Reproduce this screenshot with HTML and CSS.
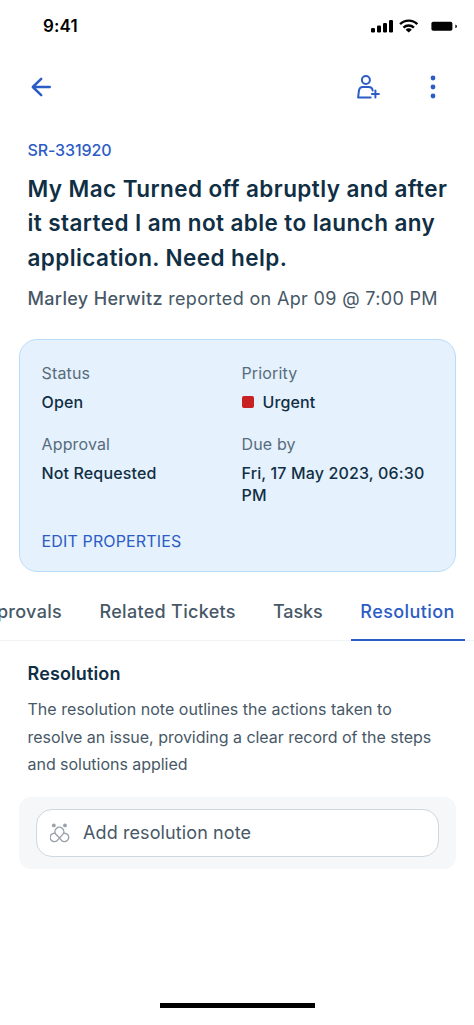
FILE: index.html
```html
<!DOCTYPE html>
<html lang="en">
<head>
<meta charset="utf-8">
<title>SR-331920</title>
<link rel="stylesheet" href="styles.css">
</head>
<body>
<div class="screen">
  <div class="status-bar">
    <span class="clock">9:41</span>
    <svg class="status-icons" width="88" height="16" viewBox="370 18 88 16">
      <rect x="371" y="28" width="4" height="4.5" rx="1.2"/>
      <rect x="377" y="25.6" width="4" height="6.9" rx="1.2"/>
      <rect x="383" y="23" width="4" height="9.5" rx="1.2"/>
      <rect x="389" y="20" width="4" height="12.5" rx="1.2"/>
      <g class="wifi">
        <path d="M400.1 24.2a12.200 12.200 0 0 1 17.200 0"/>
        <path d="M403.500 27.600a7.400 7.400 0 0 1 10.400 0"/>
      </g>
      <path d="M405.600 29.700a4.500 4.500 0 0 1 6.200 0l-3.100 2.900Z"/>
      <rect x="431.400" y="21.800" width="21" height="9" rx="1.800"/>
      <path d="M455.400 24.400v3.800q1.500-.5 1.500-1.900t-1.500-1.900Z"/>
    </svg>
  </div>
  <header class="nav">
    <svg class="icon back" width="20" height="20" viewBox="31 77 20 20">
      <path d="M49.700 87H33M41.200 78.800L32.800 87l8.400 8.200"/>
    </svg>
    <svg class="icon assign" width="26" height="26" viewBox="356 74 26 26">
      <circle cx="365.900" cy="80" r="4"/>
      <path d="M372.700 90.500c-.3-2.400-1.700-3.600-4.100-3.600h-5.800c-2.600 0-3.600 1.500-3.900 4l-.8 6.700h12.600M375.400 90.500v7M371.900 94h7"/>
    </svg>
    <svg class="dots" width="6" height="26" viewBox="0 0 6 26">
      <circle cx="3" cy="4" r="2.400"/><circle cx="3" cy="13" r="2.400"/><circle cx="3" cy="22" r="2.400"/>
    </svg>
  </header>
  <section class="summary">
    <div class="ticket-id">SR-331920</div>
    <h1 class="title">My Mac Turned off abruptly and after<br>it started I am not able to launch any<br>application. Need help.</h1>
    <p class="reporter"><span class="name">Marley Herwitz</span> <span class="when">reported on Apr 09 @ 7:00 PM</span></p>
  </section>
  <section class="properties">
    <dl class="grid">
      <div><dt>Status</dt><dd>Open</dd></div>
      <div><dt>Priority</dt><dd class="priority"><i class="swatch"></i>Urgent</dd></div>
      <div><dt>Approval</dt><dd>Not Requested</dd></div>
      <div><dt>Due by</dt><dd class="due">Fri, 17 May 2023, 06:30<br>PM</dd></div>
    </dl>
    <a class="edit">EDIT PROPERTIES</a>
  </section>
  <nav class="tabs">
    <a class="tab approvals">Approvals</a>
    <a class="tab related">Related Tickets</a>
    <a class="tab tasks">Tasks</a>
    <a class="tab active">Resolution</a>
  </nav>
  <section class="resolution">
    <h2>Resolution</h2>
    <p><span class="lead">The resolution note outlines the actions taken to</span><br>resolve an issue, providing a clear record of the steps<br>and solutions applied</p>
  </section>
  <div class="note-panel">
    <div class="note-input">
      <svg class="freddy" width="20" height="20" viewBox="50 823 20 20">
        <circle class="eye" cx="53.800" cy="825.400" r="1.900"/>
        <circle class="eye" cx="65" cy="825.400" r="1.900"/>
        <path d="M59.400 837.800L56 834.400A4.400 4.400 0 1 1 62.800 834.400L57.300 840.400A4.200 4.200 0 1 1 55.200 833.300M59.400 837.800L61.500 840.400A4.200 4.200 0 1 0 63.600 833.300"/>
      </svg>
      <span class="placeholder">Add resolution note</span>
    </div>
  </div>
  <div class="home-indicator"></div>
</div>
</body>
</html>
```
FILE: styles.css
```css
* { box-sizing: border-box; }
body { margin: 0; background: #fff; font-family: Inter, "Liberation Sans", sans-serif; color: #102f45; }
h1, h2, p, dl, dd { margin: 0; }
.screen { width: 474px; height: 1025px; display: flex; flex-direction: column; overflow: hidden; background: #fff; white-space: nowrap; }
.status-bar { height: 52px; flex: none; padding: 0 16px 0 43px; display: flex; align-items: center; justify-content: space-between; }
.clock { font-size: 17px; font-weight: 600; color: #000; letter-spacing: .1px; }
.status-icons { display: block; fill: #000; }
.wifi { fill: none; stroke: #000; stroke-width: 2.4; }
.nav { height: 70px; flex: none; padding: 0 38px 0 31px; display: flex; align-items: center; }
.icon { fill: none; stroke: #2c5cc5; stroke-linecap: round; stroke-linejoin: round; }
.back { stroke-width: 2.5; }
.assign { stroke-width: 2; margin-left: auto; margin-right: 48px; }
.dots { fill: #2c5cc5; }
.summary { padding: 16px 0 0 27.5px; flex: none; }
.ticket-id { font-size: 16px; line-height: 24px; font-weight: 500; color: #2c5cc5; letter-spacing: -.12px; }
.title { margin-top: 10px; font-size: 22.5px; line-height: 34.3px; font-weight: 600; letter-spacing: .41px; }
.reporter { margin-top: 12px; font-size: 18px; line-height: 24px; color: #475867; letter-spacing: .34px; }
.name { font-weight: 500; }
.properties { margin: 28px 18.5px 0; height: 233px; flex: none; padding: 22px 22px 0; background: #e5f1fc; border: 1.5px solid #bbdcf8; border-radius: 18px; }
.grid { display: grid; grid-template-columns: 200px 1fr; row-gap: 19px; height: 167px; align-content: start; }
dt { font-size: 16px; line-height: 23px; color: #576c7d; letter-spacing: .15px; }
dd { margin-top: 6px; font-size: 16px; line-height: 22.7px; font-weight: 500; letter-spacing: .14px; }
.priority { display: flex; align-items: center; gap: 9px; }
.swatch { width: 12px; height: 12px; border-radius: 2px; background: #c82124; }
.edit { font-size: 16px; line-height: 24px; color: #2c5cc5; letter-spacing: .15px; }
.tabs { height: 69px; flex: none; display: flex; align-items: stretch; border-bottom: 1px solid #f1f3f5; font-size: 18px; font-weight: 500; color: #475867; letter-spacing: .3px; }
.tab { flex: none; padding-top: 28px; line-height: 24px; }
.approvals { width: 99.5px; display: flex; justify-content: flex-end; padding-right: 37.5px; }
.related { width: 173.5px; }
.tasks { width: 77.5px; letter-spacing: -.1px; }
.active { width: 114px; text-align: center; color: #2c5cc5; border-bottom: 2px solid #2c5cc5; margin-bottom: -1px; letter-spacing: .4px; }
.resolution { padding: 21px 0 0 27.5px; flex: none; }
h2 { font-size: 18px; line-height: 24px; font-weight: 600; letter-spacing: .13px; }
.resolution p { margin-top: 10.5px; font-size: 16px; line-height: 27.4px; color: #475867; letter-spacing: -.03px; }
.lead { letter-spacing: .03px; }
.note-panel { margin: 18.3px 18.5px 0; padding: 12px 17px; height: 72px; flex: none; background: #f5f7f9; border-radius: 12px; }
.note-input { height: 48px; border: 1px solid #cfd7df; border-radius: 16px; background: #fff; display: flex; align-items: center; padding-left: 13.5px; gap: 13px; }
.freddy { fill: none; stroke: #98a2ab; stroke-width: 1.4; stroke-linejoin: round; }
.eye { fill: #98a2ab; stroke: none; }
.placeholder { font-size: 18px; line-height: 24px; padding-top: 1px; color: #475867; letter-spacing: .1px; }
.home-indicator { margin: auto auto 17px 160px; width: 155px; height: 5px; flex: none; background: #000; }
```
